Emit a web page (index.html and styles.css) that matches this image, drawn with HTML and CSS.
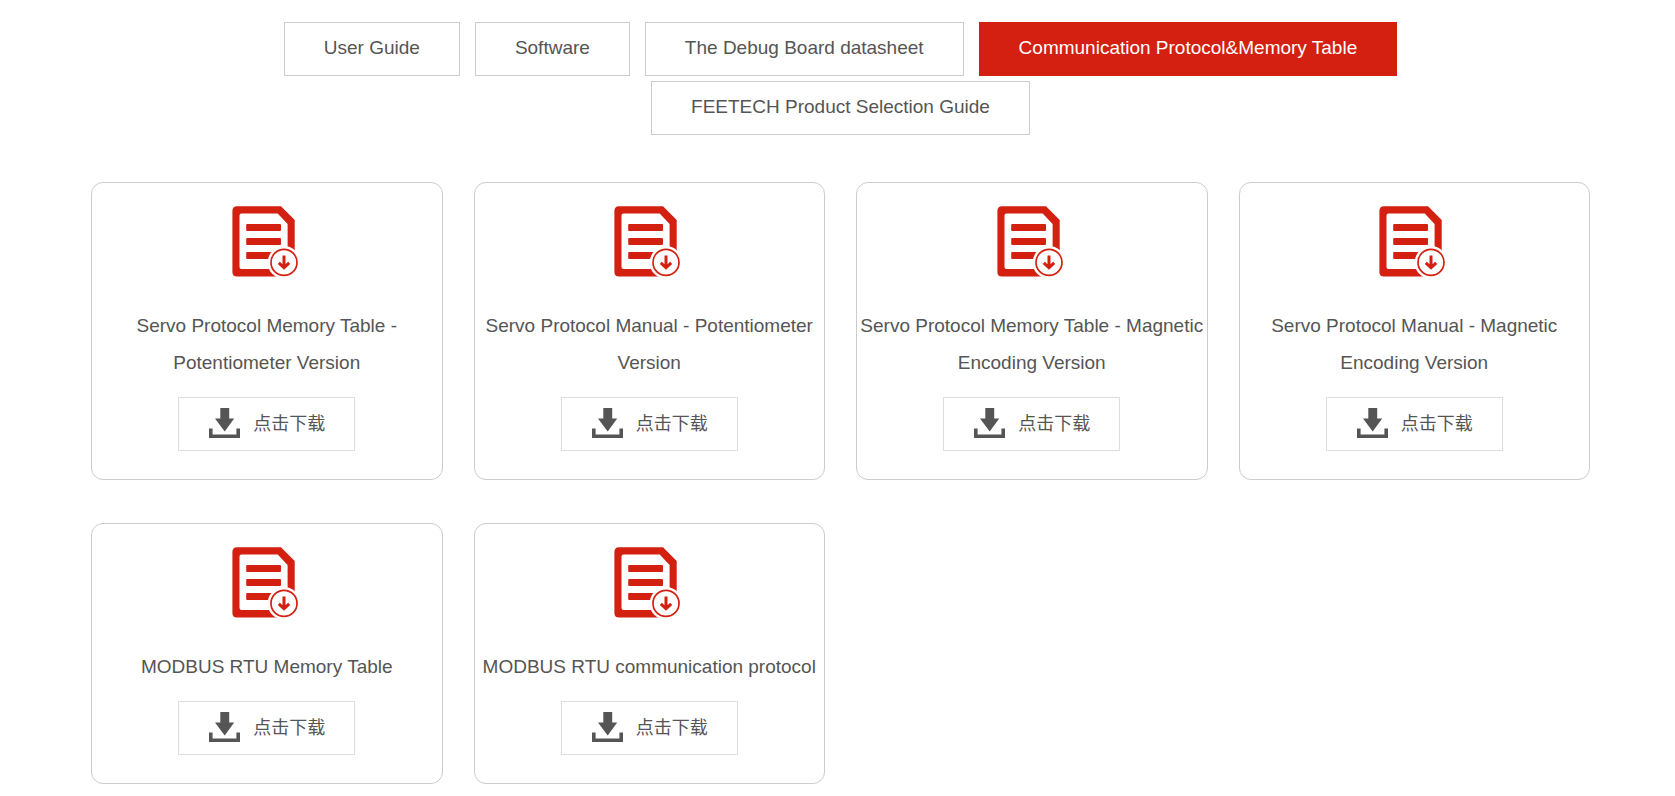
FILE: index.html
```html
<!DOCTYPE html>
<html lang="en"><head>
<meta charset="utf-8">
<title>Downloads</title>
<link rel="stylesheet" href="styles.css">
</head><body>
<svg class="defs" width="0" height="0" aria-hidden="true">
<symbol id="doc" viewBox="0 0 72 72">
<path fill="#d32011" fill-rule="evenodd" d="M6 .3 H50 L63.7 14 V64 L57 70.6 H6 Q1.4 70.6 1.4 66 V5 Q1.4 .3 6 .3 z M10.5 7.4 Q8.5 7.4 8.5 9.4 V61 Q8.5 63 10.5 63 H56.6 V18 L46.7 7.4 z"/>
<g fill="#d32011">
<rect x="15.2" y="18" width="34.8" height="7" rx="1"/>
<rect x="15.2" y="32" width="34.8" height="7" rx="1"/>
<rect x="15.2" y="46" width="34.8" height="7" rx="1"/>
</g>
<circle cx="53" cy="56.4" r="16.3" fill="#fff"/>
<circle cx="53" cy="56.4" r="13" fill="none" stroke="#d32011" stroke-width="1.7"/>
<path fill="none" stroke="#d32011" stroke-width="3" d="M53 49.6 V61 M47.8 56.8 L53 61.6 L58.2 56.8"/>
</symbol>
<symbol id="down" viewBox="0 0 31 30">
<path fill="#555" d="M11.3 0 H20.2 V10.5 H25.2 L15.7 23.6 L6 10.5 H11.3 z M0 20.4 H3.6 V26.4 H27.4 V20.4 H31 V30 H0 z"/>
</symbol>
</svg>
<main class="download">
<nav>
<ul class="tabs">
<li><a href="#guide">User Guide</a></li>
<li><a href="#software">Software</a></li>
<li><a href="#board">The Debug Board datasheet</a></li>
<li><a href="#protocol" class="on" aria-current="page">Communication Protocol&amp;Memory Table</a></li>
<li><a href="#selection">FEETECH Product Selection Guide</a></li>
</ul>
</nav>
<ul class="list">
<li class="card">
<svg class="doc" aria-hidden="true"><use href="#doc"/></svg>
<p>Servo Protocol Memory Table - Potentiometer Version</p>
<a class="btn" href="#file1"><svg aria-hidden="true"><use href="#down"/></svg><span lang="zh">点击下载</span></a>
</li>
<li class="card">
<svg class="doc" aria-hidden="true"><use href="#doc"/></svg>
<p>Servo Protocol Manual - Potentiometer Version</p>
<a class="btn" href="#file2"><svg aria-hidden="true"><use href="#down"/></svg><span lang="zh">点击下载</span></a>
</li>
<li class="card">
<svg class="doc" aria-hidden="true"><use href="#doc"/></svg>
<p>Servo Protocol Memory Table - Magnetic Encoding Version</p>
<a class="btn" href="#file3"><svg aria-hidden="true"><use href="#down"/></svg><span lang="zh">点击下载</span></a>
</li>
<li class="card">
<svg class="doc" aria-hidden="true"><use href="#doc"/></svg>
<p>Servo Protocol Manual - Magnetic Encoding Version</p>
<a class="btn" href="#file4"><svg aria-hidden="true"><use href="#down"/></svg><span lang="zh">点击下载</span></a>
</li>
<li class="card">
<svg class="doc" aria-hidden="true"><use href="#doc"/></svg>
<p>MODBUS RTU Memory Table</p>
<a class="btn" href="#file5"><svg aria-hidden="true"><use href="#down"/></svg><span lang="zh">点击下载</span></a>
</li>
<li class="card">
<svg class="doc" aria-hidden="true"><use href="#doc"/></svg>
<p>MODBUS RTU communication protocol</p>
<a class="btn" href="#file6"><svg aria-hidden="true"><use href="#down"/></svg><span lang="zh">点击下载</span></a>
</li>
</ul>
</main>
</body></html>
```

FILE: styles.css
```css
* {
	box-sizing: border-box;
}

body {
	margin: 0;
	background: #fff;
	color: #555;
	font-family: "Liberation Sans", Arial, "Noto Sans CJK SC", sans-serif;
	font-size: 19px;
}

ul,
p {
	margin: 0;
	padding: 0;
	list-style: none;
}

a {
	color: inherit;
	text-decoration: none;
}

.defs {
	display: block;
}

.download {
	padding: 22px 85px 12px 91px;
}

.tabs {
	display: flex;
	flex-wrap: wrap;
	justify-content: center;
	gap: 5px 15px;
	margin-bottom: 47px;
}

.tabs a {
	display: block;
	padding: 0 39px 2px;
	border: 1px solid #ccc;
	line-height: 50px;
}

.tabs .on {
	border-color: #d32011;
	background: #d32011;
	color: #fff;
}

.list {
	display: grid;
	grid-template-columns: repeat(4, 1fr);
	align-items: start;
	gap: 43px 31px;
}

.card {
	display: flex;
	flex-direction: column;
	align-items: center;
	padding: 23px 0 28px;
	border: 1px solid #ccc;
	border-radius: 12px;
	text-align: center;
}

.doc {
	width: 72px;
	height: 72px;
	margin-bottom: 29px;
}

.card p {
	line-height: 37px;
}

.btn {
	display: flex;
	align-items: center;
	gap: 13px;
	height: 54px;
	margin-top: 16px;
	padding: 0 29px 2px 30px;
	border: 1px solid #ddd;
	font-family: "Noto Sans CJK SC", sans-serif;
	font-size: 18px;
}

.btn svg {
	width: 31px;
	height: 30px;
}

.btn span {
	padding-bottom: 3px;
}
```
